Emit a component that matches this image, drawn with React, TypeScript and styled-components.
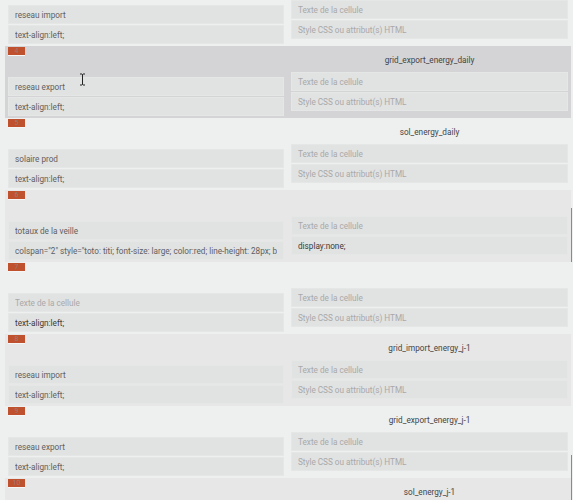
import React from "react";
import styled, { createGlobalStyle } from "styled-components";

const Global = createGlobalStyle`
  html, body { margin: 0; padding: 0; background: #eeefef; }
  body { font-family: Roboto, "Noto Sans", Arial, sans-serif; overflow: hidden; }
  * { box-sizing: border-box; }
`;

const Page = styled.div`
  position: relative;
  width: 573px;
  height: 500px;
  overflow: hidden;
  padding: 0 2px 0 5px;
  background: #eeefef;
`;

const List = styled.div`
  display: flex;
  flex-direction: column;
  margin-top: -26px;
`;

const Block = styled.div<{ $alt?: boolean; $hover?: boolean }>`
  display: grid;
  grid-template-columns: 282px 284px;
  height: 72px;
  background: ${(p) => (p.$hover ? "#d4d4d6" : p.$alt ? "#e7e7e8" : "#eeefef")};
`;

const LeftCol = styled.div`
  display: flex;
  flex-direction: column;
  justify-content: space-between;
  padding: 1px 3px 2px 3px;
`;

const RightCol = styled.div`
  display: flex;
  flex-direction: column;
  padding: 0 3px 7px 4px;
`;

const Badge = styled.div`
  width: 17px;
  height: 8px;
  background: #c0512e;
  color: #9c7b70;
  font-size: 7px;
  line-height: 8px;
  text-align: center;
  box-shadow: 0 1px 0 #f6f6f6;
`;

const Title = styled.div`
  height: 26px;
  padding-top: 1px;
  font-size: 8.2px;
  line-height: 26px;
  color: #444;
  text-align: center;
`;

const Fields = styled.div`
  display: flex;
  flex-direction: column;
  gap: 1px;
`;

const Field = styled.input<{ $dark?: boolean }>`
  display: block;
  width: 100%;
  height: 19px;
  margin: 0;
  padding: 0 6px;
  border: 1px solid #e5e6e6;
  background: #e1e2e2;
  font-family: Roboto, "Noto Sans", Arial, sans-serif;
  font-size: 8.2px;
  color: ${(p) => (p.$dark ? "#3a3a3a" : "#5f5f5f")};
  outline: none;
  &::placeholder { color: #a9a9a9; }
`;

const ScrollThumb = styled.div<{ $top: number; $h: number }>`
  position: absolute;
  right: 1px;
  top: ${(p) => p.$top}px;
  width: 1px;
  height: ${(p) => p.$h}px;
  background: #8a8a8a;
`;

const Cursor = styled.svg`
  position: absolute;
  left: 79px;
  top: 73px;
`;

type Row = {
  badge: string;
  title: string;
  left: [string, string];
  leftDark?: [boolean, boolean];
  right: [string, string];
  rightDark?: [boolean, boolean];
};

const TEXT_PH = "Texte de la cellule";
const STYLE_PH = "Style CSS ou attribut(s) HTML";

const rows: Row[] = [
  { badge: "", title: "", left: ["reseau import", "text-align:left;"], right: ["", ""] },
  { badge: "4", title: "grid_export_energy_daily", left: ["reseau export", "text-align:left;"], right: ["", ""] },
  { badge: "5", title: "sol_energy_daily", left: ["solaire prod", "text-align:left;"], right: ["", ""] },
  {
    badge: "6",
    title: "",
    left: ["totaux de la veille", 'colspan="2" style="toto: titi; font-size: large; color:red; line-height: 28px; background: #eee;"'],
    right: ["", "display:none;"],
    rightDark: [false, true],
  },
  { badge: "7", title: "", left: ["", "text-align:left;"], leftDark: [false, true], right: ["", ""] },
  { badge: "8", title: "grid_import_energy_j-1", left: ["reseau import", "text-align:left;"], right: ["", ""] },
  { badge: "9", title: "grid_export_energy_j-1", left: ["reseau export", "text-align:left;"], right: ["", ""] },
  { badge: "10", title: "sol_energy_j-1", left: ["reseau export", "text-align:left;"], right: ["", ""] },
];

export default function App() {
  return (
    <>
      <Global />
      <Page>
        <List>
          {rows.map((r, i) => (
            <Block key={i} $alt={i % 2 === 1} $hover={i === 1}>
              <LeftCol>
                <Badge>{r.badge}</Badge>
                <Fields>
                  <Field readOnly value={r.left[0]} placeholder={TEXT_PH} $dark={r.leftDark?.[0]} />
                  <Field readOnly value={r.left[1]} placeholder={STYLE_PH} $dark={r.leftDark?.[1]} />
                </Fields>
              </LeftCol>
              <RightCol>
                <Title>{r.title}</Title>
                <Fields>
                  <Field readOnly value={r.right[0]} placeholder={TEXT_PH} $dark={r.rightDark?.[0]} />
                  <Field readOnly value={r.right[1]} placeholder={STYLE_PH} $dark={r.rightDark?.[1]} />
                </Fields>
              </RightCol>
            </Block>
          ))}
        </List>
        <ScrollThumb $top={208} $h={54} />
        <ScrollThumb $top={455} $h={45} />
        <Cursor width="7" height="13" viewBox="0 0 7 13">
          <path d="M1 1h2l0.5 0.5L4 1h2M3.5 1.5v10M1 12h2l0.5-0.5L4 12h2" stroke="#222" strokeWidth="1" fill="none" />
        </Cursor>
      </Page>
    </>
  );
}
